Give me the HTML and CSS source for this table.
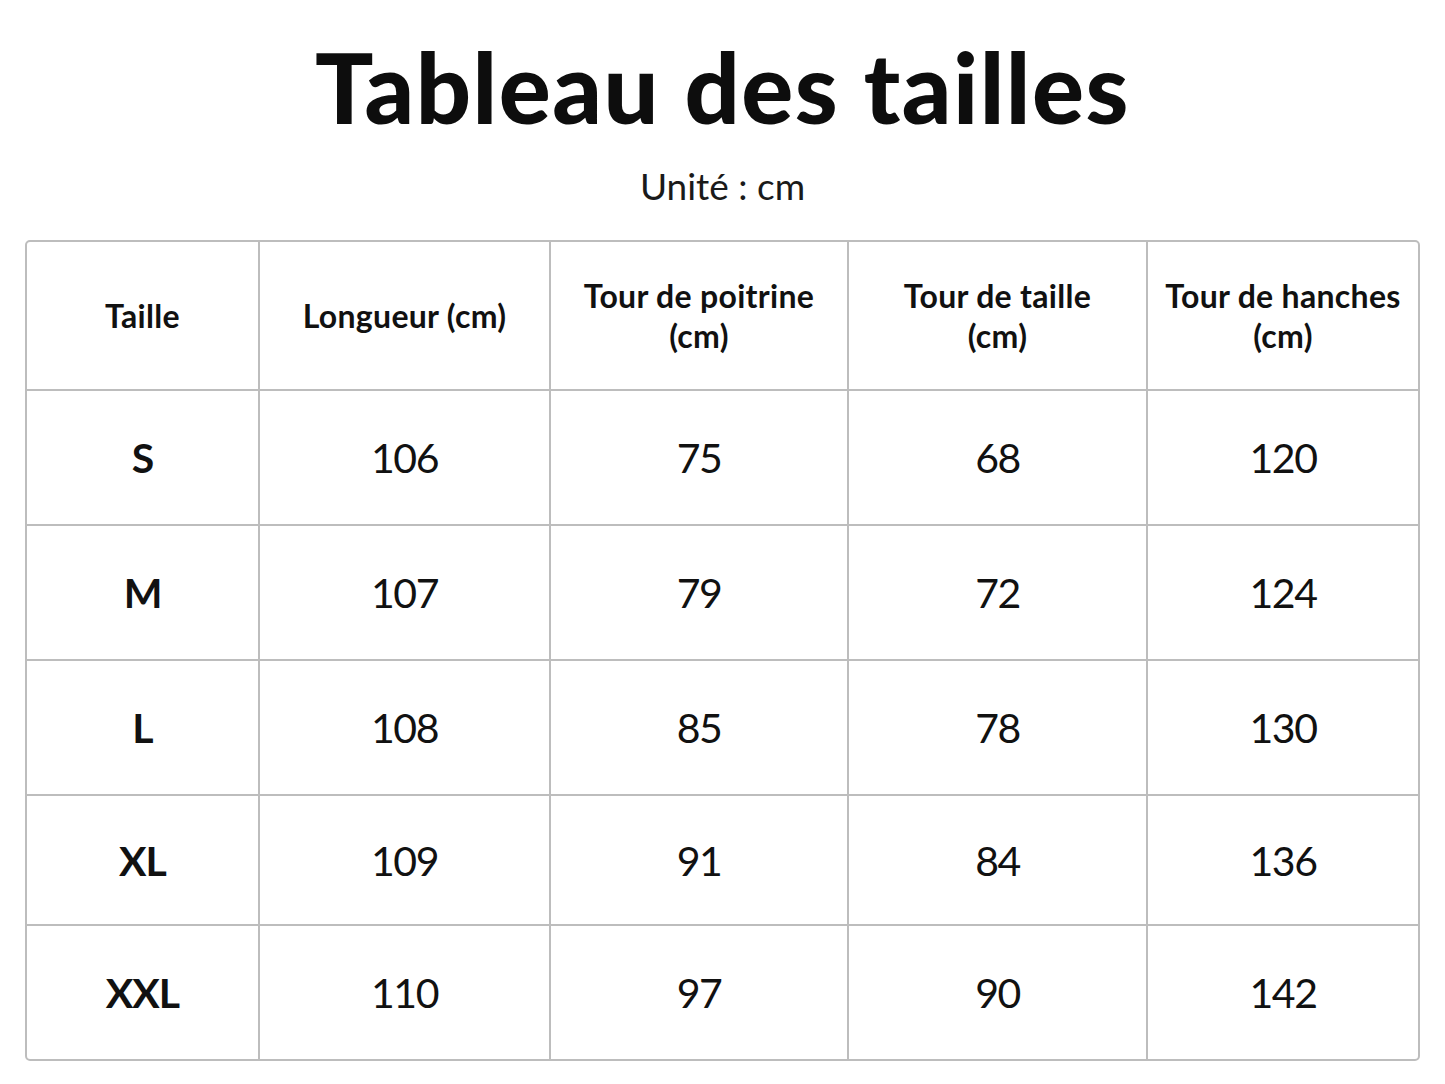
FILE: index.html
```html
<!DOCTYPE html>
<html lang="fr">
<head>
<meta charset="utf-8">
<title>Tableau des tailles</title>
<link rel="stylesheet" href="styles.css">
</head>
<body>
<main class="page">
  <h1 class="title">Tableau des tailles</h1>
  <p class="unit">Unité : cm</p>
  <div class="table-wrap">
    <table class="sizes">
      <colgroup>
        <col class="c1"><col class="c2"><col class="c3"><col class="c4"><col class="c5">
      </colgroup>
      <thead>
        <tr>
          <th>Taille</th>
          <th>Longueur (cm)</th>
          <th>Tour de poitrine<br>(cm)</th>
          <th>Tour de taille<br>(cm)</th>
          <th>Tour de hanches<br>(cm)</th>
        </tr>
      </thead>
      <tbody>
        <tr class="r1"><td class="size">S</td><td>106</td><td>75</td><td>68</td><td>120</td></tr>
        <tr class="r2"><td class="size">M</td><td>107</td><td>79</td><td>72</td><td>124</td></tr>
        <tr class="r3"><td class="size">L</td><td>108</td><td>85</td><td>78</td><td>130</td></tr>
        <tr class="r4"><td class="size">XL</td><td>109</td><td>91</td><td>84</td><td>136</td></tr>
        <tr class="r5"><td class="size">XXL</td><td>110</td><td>97</td><td>90</td><td>142</td></tr>
      </tbody>
    </table>
  </div>
</main>
</body>
</html>
```

FILE: styles.css
```css
html, body {
  margin: 0;
  padding: 0;
  background: #ffffff;
}
body {
  font-family: "Lato", "Open Sans", "Liberation Sans", sans-serif;
  color: #111111;
}
.page {
  padding: 29px 25px 0 25px;
}
.title {
  margin: 0;
  text-align: center;
  font-size: 97px;
  line-height: 115px;
  font-weight: 900;
  letter-spacing: 1.5px;
  color: #0d0d0d;
}
.unit {
  margin: 19px 0 0 0;
  text-align: center;
  font-size: 37px;
  line-height: 46px;
  font-weight: 400;
  color: #1a1a1a;
}
.table-wrap {
  margin-top: 31px;
  border: 2px solid #bdbdbd;
  border-radius: 5px;
  overflow: hidden;
}
.sizes {
  width: 100%;
  border-collapse: collapse;
  table-layout: fixed;
}
.c1 { width: 232px; }
.c2 { width: 291px; }
.c3 { width: 298px; }
.c4 { width: 299px; }
.sizes th, .sizes td {
  text-align: center;
  vertical-align: middle;
  border-right: 2px solid #bdbdbd;
  border-bottom: 2px solid #bdbdbd;
  padding: 0;
}
.sizes th:last-child, .sizes td:last-child { border-right: none; }
.sizes tbody tr:last-child td { border-bottom: none; }
.sizes th {
  height: 147px;
  font-size: 32px;
  line-height: 40px;
  font-weight: 700;
  letter-spacing: 0.3px;
  color: #111111;
}
.sizes td {
  height: 133px;
  font-size: 41px;
  font-weight: 400;
  letter-spacing: -1.5px;
  color: #111111;
}
.sizes td.size {
  font-weight: 700;
  letter-spacing: -1px;
}
.sizes tr.r4 td { height: 128px; }
```
